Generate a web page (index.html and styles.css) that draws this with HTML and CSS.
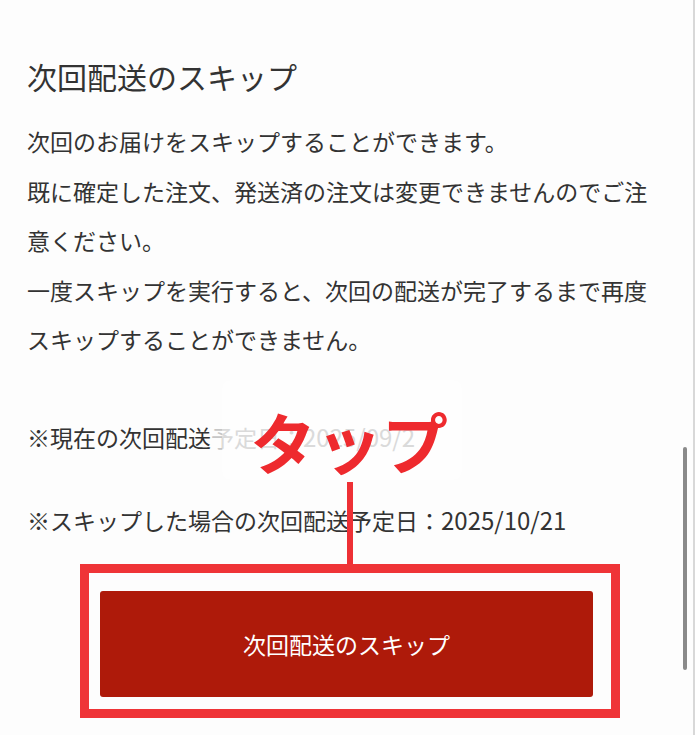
FILE: index.html
```html
<!DOCTYPE html>
<html lang="ja">
<head>
<meta charset="utf-8">
<link rel="stylesheet" href="styles.css">
</head>
<body>
<div class="screen">
  <section class="content">
    <h2 class="title">次回配送のスキップ</h2>
    <div class="desc">
      <p>次回のお届けをスキップすることができます。</p>
      <p>既に確定した注文、発送済の注文は変更できませんのでご注意ください。</p>
      <p>一度スキップを実行すると、次回の配送が完了するまで再度スキップすることができません。</p>
    </div>
    <div class="notes">
      <p>※現在の次回配送<span class="faded">予定日：<span class="date">2025/09/2</span></span></p>
      <p>※スキップした場合の次回配送予定日：<span class="date">2025/10/21</span></p>
    </div>
    <button class="skip-btn">次回配送のスキップ</button>
  </section>

  <div class="fade-box"></div>
  <div class="tap-label">タップ</div>
  <div class="tap-line"></div>
  <div class="tap-frame"></div>
  <div class="scrollbar"></div>
</div>
</body>
</html>
```

FILE: styles.css
```css
html, body {
  margin: 0;
  padding: 0;
  background: #fdfdfd;
}

.screen {
  position: relative;
  width: 693px;
  height: 735px;
  border-right: 2px solid #d8d8d8;
  background: #fdfdfd;
  overflow: hidden;
  font-family: "Noto Sans CJK JP", "Noto Sans", sans-serif;
  color: #333333;
}

.content {
  padding: 56px 28px 0 27px;
}

.title {
  margin: 0;
  font-size: 30px;
  font-weight: 400;
  line-height: 40px;
  color: #333333;
}

.desc {
  margin-top: 21px;
  width: 630px;
}

.desc p,
.notes p {
  margin: 0;
  font-size: 23px;
  line-height: 49.5px;
}

.notes {
  margin-top: 47px;
  display: flex;
  flex-direction: column;
  gap: 32.5px;
}

.date {
  font-size: 24px;
}

.faded {
  color: #c6c6c6;
}

.skip-btn {
  display: block;
  margin: 46px 0 0 73px;
  width: 493px;
  height: 106px;
  border: none;
  border-radius: 3px;
  background: #ae1a0a;
  color: #ffffff;
  font-family: "Noto Sans CJK JP", "Noto Sans", sans-serif;
  font-size: 23px;
  font-weight: 400;
  padding: 0;
}

.fade-box {
  position: absolute;
  left: 222px;
  top: 380px;
  width: 240px;
  height: 100px;
  border-radius: 8px;
  background: rgba(255, 255, 255, 0.35);
}

.tap-label {
  position: absolute;
  left: 250px;
  top: 407px;
  font-size: 66px;
  line-height: 66px;
  font-weight: 700;
  color: #ee2a2e;
}

.tap-line {
  position: absolute;
  left: 347px;
  top: 482px;
  width: 6px;
  height: 84px;
  background: #ee3035;
}

.tap-frame {
  position: absolute;
  left: 80px;
  top: 564px;
  width: 540px;
  height: 154px;
  box-sizing: border-box;
  border: 9px solid #ef3437;
}

.scrollbar {
  position: absolute;
  left: 683px;
  top: 447px;
  width: 4px;
  height: 223px;
  border-radius: 2px;
  background: #8a8a8a;
}
```
